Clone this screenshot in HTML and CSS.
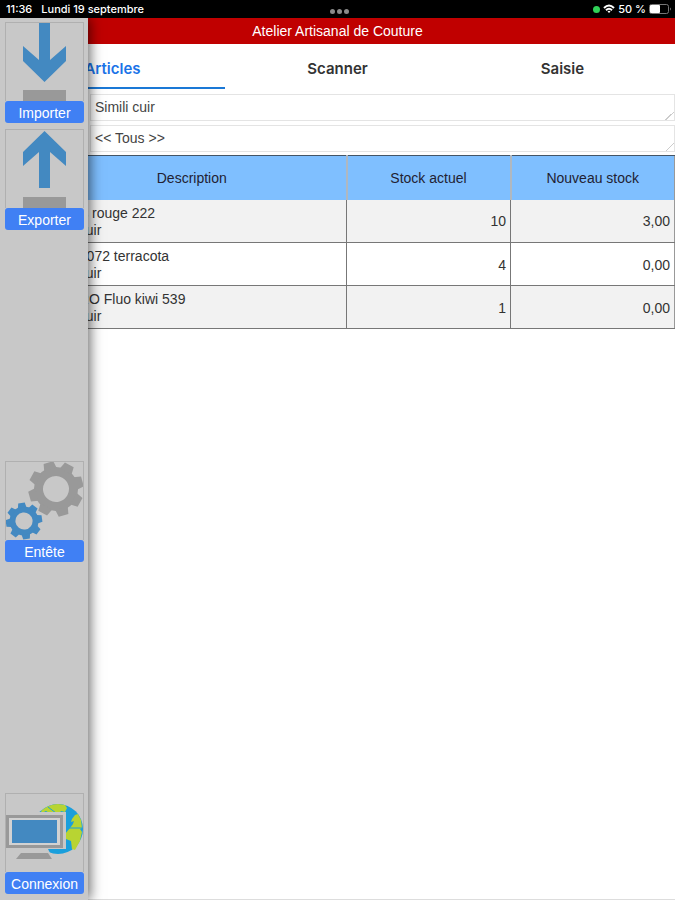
FILE: index.html
```html
<!DOCTYPE html>
<html lang="fr">
<head>
    <meta charset="UTF-8">
    <meta name="viewport" content="width=device-width, initial-scale=1.0">
    <title>Atelier Artisanal de Couture</title>
    <link rel="stylesheet" href="styles.css">
</head>
<body>
    <div class="status-bar">
        <div class="status-left">
            <span>11:36</span>
            <span>Lundi 19 septembre</span>
        </div>
        <div class="dots"><i></i><i></i><i></i></div>
        <div class="status-right">
            <i class="camera-dot"></i>
            <svg width="12" height="10" viewBox="0 0 12 10" fill="none" stroke="#fff" stroke-width="2">
                <path d="M1 4Q6 -1 11 4M3 6.200Q6 3.300 9 6.200"/>
                <path d="M4.500 7.500Q6 6.200 7.500 7.500L6 9z" fill="#fff" stroke="none"/>
            </svg>
            <span>50 %</span>
            <svg width="23" height="10" viewBox="0 0 23 10">
                <rect x="0.500" y="0.500" width="19" height="9" rx="2" fill="none" stroke="#777"/>
                <rect x="1" y="1" width="10" height="8" rx="1" fill="#fff"/>
                <path d="M21 3.500v3q2-1.500 0-3z" fill="#777"/>
            </svg>
        </div>
    </div>

    <div class="app">
        <main class="content">
            <h1 class="title">Atelier Artisanal de Couture</h1>

            <nav class="tabs">
                <button type="button" class="tab active">Articles</button>
                <button type="button" class="tab">Scanner</button>
                <button type="button" class="tab">Saisie</button>
            </nav>

            <div class="filters">
                <textarea class="filter" aria-label="Famille" rows="1">Simili cuir</textarea>
                <textarea class="filter" aria-label="Fournisseur" rows="1">&lt;&lt; Tous &gt;&gt;</textarea>
            </div>

            <table class="stock">
                <colgroup>
                    <col class="col-mark">
                    <col>
                    <col class="col-qty">
                    <col class="col-qty">
                </colgroup>
                <thead>
                    <tr>
                        <th></th>
                        <th>Description</th>
                        <th>Stock actuel</th>
                        <th>Nouveau stock</th>
                    </tr>
                </thead>
                <tbody>
                    <tr><td></td><td>Velours rouge 222<br>Simili cuir</td><td class="qty">10</td><td class="qty">3,00</td></tr>
                    <tr><td></td><td>Simili 2072 terracota<br>Simili cuir</td><td class="qty">4</td><td class="qty">0,00</td></tr>
                    <tr><td></td><td>POLARO Fluo kiwi 539<br>Simili cuir</td><td class="qty">1</td><td class="qty">0,00</td></tr>
                </tbody>
            </table>
        </main>

        <!-- Side menu, slides over the content -->
        <aside class="drawer">
            <div class="drawer-group">
                <button type="button" class="action">
                    <svg class="action-icon" viewBox="1 1 77 78">
                        <path d="M34 1h11v37l16-14v15L39.500 60 18 39V24l16 14z" fill="#4389c1"/>
                        <rect x="18" y="68" width="43" height="12" fill="#999"/>
                    </svg>
                    <span class="action-label">Importer</span>
                </button>
                <button type="button" class="action">
                    <svg class="action-icon" viewBox="1 1 77 78">
                        <path d="M39.500 2L61 23v14L45 23v36H34V23L18 37V23z" fill="#4389c1"/>
                        <rect x="18" y="68" width="43" height="12" fill="#999"/>
                    </svg>
                    <span class="action-label">Exporter</span>
                </button>
            </div>

            <button type="button" class="action">
                <svg class="action-icon" viewBox="1 1 77 78">
                    <defs>
                        <g id="gear">
                            <circle r="17.500" fill="none" stroke="currentColor" stroke-width="9"/>
                            <g fill="currentColor">
                                <path id="tooth" d="M-6.500-20L-5-27.500H5L6.500-20z"/>
                                <use href="#tooth" transform="rotate(45)"/>
                                <use href="#tooth" transform="rotate(90)"/>
                                <use href="#tooth" transform="rotate(135)"/>
                                <use href="#tooth" transform="rotate(180)"/>
                                <use href="#tooth" transform="rotate(225)"/>
                                <use href="#tooth" transform="rotate(270)"/>
                                <use href="#tooth" transform="rotate(315)"/>
                            </g>
                        </g>
                    </defs>
                    <use href="#gear" color="#999" transform="translate(51 28) rotate(-16)"/>
                    <use href="#gear" color="#4389c1" transform="translate(19 60) rotate(-8) scale(0.660)"/>
                </svg>
                <span class="action-label">Entête</span>
            </button>

            <button type="button" class="action">
                <svg class="action-icon" viewBox="1 1 77 78">
                    <circle cx="53" cy="36" r="25" fill="#1a9fdc"/>
                    <path d="M36 18q8-7 17-7l7 1 2 3-2 4-4-1-3 4-4-3-5 1-3-2-4 2zM70 22l3-1 3 6 1 8-2 1 2 3-2 9-5 9-3-1-1-8-5-2-1-5 5-6 3-4 1-3-3 1 1-3z" fill="#b8d432"/>
                    <path d="M63 35h14M43 14l8 6" stroke="#1a9fdc"/>
                    <path d="M0 19h61v37H0z" fill="#c8c8c8"/>
                    <rect x="2.500" y="23.500" width="54" height="30" fill="#d2d2d2" stroke="#999" stroke-width="3"/>
                    <rect x="7" y="27" width="45" height="23" fill="#4389c1"/>
                    <path d="M0 56h43l6 12H0z" fill="#c8c8c8"/>
                    <path d="M16 60h27l4 6H11z" fill="#999"/>
                </svg>
                <span class="action-label">Connexion</span>
            </button>
        </aside>
    </div>
</body>
</html>
```
FILE: styles.css
```css
* {
    box-sizing: border-box;
}
body {
    margin: 0;
    height: 100vh;
    display: flex;
    flex-direction: column;
    font-family: "Liberation Sans", Arial, sans-serif;
    font-size: 14px;
    color: #333;
    background-color: #fff;
}
button {
    font: inherit;
    border: 0;
    padding: 0;
    background: none;
}

/* Status bar */
.status-bar {
    display: grid;
    grid-template-columns: 1fr auto 1fr;
    align-items: center;
    height: 18px;
    padding: 0 3px 0 6px;
    background-color: #000;
    color: #fff;
    font-family: Inter, sans-serif;
    font-size: 11px;
    font-weight: 500;
}
.status-left {
    display: flex;
    gap: 9px;
}
.status-right {
    display: flex;
    align-items: center;
    justify-content: flex-end;
    gap: 3px;
}
.dots {
    display: flex;
    gap: 2px;
    padding-top: 5px;
}
.dots i {
    width: 5px;
    height: 5px;
    border-radius: 50%;
    background-color: #8a8a8a;
}
.camera-dot {
    width: 7px;
    height: 7px;
    border-radius: 50%;
    background-color: #30d158;
}

.app {
    position: relative;
    flex: 1;
    overflow: hidden;
}
.content {
    height: 100%;
    border-bottom: 1px solid #ddd;
}
.title {
    margin: 0;
    padding-top: 1px;
    background-color: #c00000;
    color: #fff;
    font-size: 14px;
    font-weight: normal;
    line-height: 25px;
    text-align: center;
}

/* Tabs */
.tabs {
    display: grid;
    grid-template-columns: repeat(3, 1fr);
}
.tab {
    height: 45px;
    padding-top: 5px;
    border-bottom: 2px solid transparent;
    color: #333;
    font-family: Inter, sans-serif;
    font-size: 15px;
    font-weight: 600;
}
.tab.active {
    color: #1a73e8;
    border-bottom-color: #1a78d6;
}

/* Filters */
.filters {
    display: flex;
    flex-direction: column;
    gap: 4px;
    padding: 5px 0 3px 90px;
}
.filter {
    height: 27px;
    padding: 4px;
    border: 1px solid #e4e4e4;
    background-color: #fff;
    color: #444;
    font: inherit;
    line-height: 16px;
    overflow: hidden;
}
.filter::-webkit-resizer {
    background: linear-gradient(135deg, transparent 70%, #ccc 70%, #ccc 75%, transparent 75%);
}

/* Stock table */
.stock {
    width: 100%;
    table-layout: fixed;
    border-collapse: collapse;
    border-right: 1px solid #999;
}
.col-mark {
    width: 36px;
}
.col-qty {
    width: 164px;
}
.stock th {
    height: 44px;
    padding: 0;
    border-top: 1px solid #456;
    border-left: 2px solid #b0b8c0;
    background-color: #7fbfff;
    color: #223;
    font-weight: normal;
}
.stock td {
    height: 43px;
    padding: 5px 4px 3px;
    border-left: 1px solid #777;
    border-bottom: 1px solid #777;
    line-height: 17px;
}
.stock tbody tr:nth-child(odd) {
    background-color: #f2f2f2;
}
.stock .qty {
    text-align: right;
}

/* Side menu */
.drawer {
    position: absolute;
    top: 0;
    bottom: 0;
    left: 0;
    width: 88px;
    padding: 4px 4px 6px 5px;
    display: flex;
    flex-direction: column;
    justify-content: space-between;
    background-color: #c8c8c8;
    box-shadow: 2px 0 12px rgba(0, 0, 0, 0.6);
}
.drawer-group {
    display: flex;
    flex-direction: column;
    gap: 6px;
}
.action {
    display: flex;
    flex-direction: column;
}
.action-icon {
    width: 100%;
    height: 79px;
    border: 1px solid #b0b0b0;
    border-bottom: 0;
}
.action-label {
    width: 100%;
    height: 22px;
    border-radius: 3px;
    background-color: #4080f4;
    color: #fff;
    line-height: 22px;
    padding-top: 1px;
}
```
